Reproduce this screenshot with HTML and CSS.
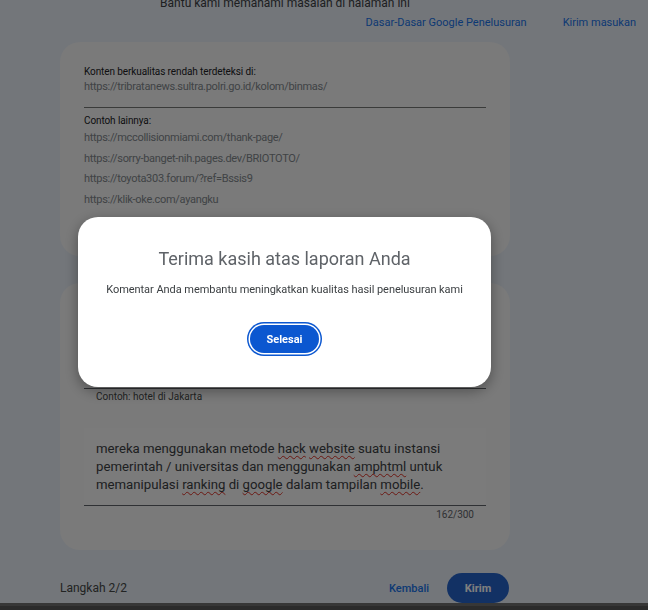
FILE: index.html
```html
<!DOCTYPE html>
<html lang="id">
<head>
    <meta charset="UTF-8">
    <meta name="viewport" content="width=device-width, initial-scale=1.0">
    <title>Laporkan konten berkualitas rendah</title>
    <link rel="stylesheet" href="styles.css">
</head>
<body>
    <div class="intro">Bantu kami memahami masalah di halaman ini</div>
    <div class="top-links">
        <a href="#">Dasar-Dasar Google Penelusuran</a>
        <a href="#">Kirim masukan</a>
    </div>

    <div class="main">
        <div class="card">
            <div class="label">Konten berkualitas rendah terdeteksi di:</div>
            <div class="url">https://tribratanews.sultra.polri.go.id/kolom/binmas/</div>
            <div class="divider"></div>
            <div class="label label-more">Contoh lainnya:</div>
            <div class="more">
                <div class="url">https://mccollisionmiami.com/thank-page/</div>
                <div class="url">https://sorry-banget-nih.pages.dev/BRIOTOTO/</div>
                <div class="url">https://toyota303.forum/?ref=Bssis9</div>
                <div class="url">https://klik-oke.com/ayangku</div>
            </div>
        </div>

        <div class="card card-form">
            <div class="form-title">Kueri penelusuran</div>
            <div class="field"></div>
            <div class="hint">Contoh: hotel di Jakarta</div>
            <div class="textarea">mereka menggunakan metode <span class="typo">hack</span> <span class="typo">website</span> suatu instansi pemerintah / universitas dan menggunakan <span class="typo">amphtml</span> untuk memanipulasi <span class="typo">ranking</span> di <span class="typo">google</span> dalam tampilan <span class="typo">mobile</span>.</div>
            <div class="counter">162/300</div>
        </div>

        <div class="steps">
            <span class="step">Langkah 2/2</span>
            <div class="actions">
                <a href="#" class="back">Kembali</a>
                <button class="send">Kirim</button>
            </div>
        </div>
    </div>
    <div class="taskbar"></div>

    <div class="overlay">
        <div class="dialog">
            <div class="dialog-title">Terima kasih atas laporan Anda</div>
            <div class="dialog-text">Komentar Anda membantu meningkatkan kualitas hasil penelusuran kami</div>
            <button class="done">Selesai</button>
        </div>
    </div>
</body>
</html>
```

FILE: styles.css
```css
body {
    font-family: Roboto, "Liberation Sans", sans-serif;
    background-color: #e6ecf4;
    color: #202124;
    margin: 0;
    padding: 0;
    overflow: hidden;
}

.intro {
    margin-top: -7px;
    width: 450px;
    margin-left: 60px;
    text-align: center;
    font-size: 12px;
    line-height: 20px;
    color: #3c4043;
}

.top-links {
    display: flex;
    justify-content: flex-end;
    gap: 36px;
    padding-right: 12px;
    margin-top: 2px;
    font-size: 11px;
    line-height: 16px;
}

.top-links a {
    color: #1a73e8;
    text-decoration: none;
}

.main {
    width: 450px;
    margin-left: 60px;
    margin-top: 11px;
}

.card {
    background-color: #f4f4f4;
    border-radius: 20px;
    padding: 22px 24px 46px;
}

.label {
    font-size: 10px;
    letter-spacing: -0.1px;
    line-height: 15px;
    color: #202124;
}

.label-more {
    margin-top: 6px;
    line-height: 14px;
}

.url {
    font-size: 11px;
    letter-spacing: -0.3px;
    line-height: 16px;
    color: #80868b;
}

.more .url {
    line-height: 20.6px;
}

.divider {
    height: 1px;
    background-color: #747775;
    margin-top: 12px;
}

.card-form {
    margin-top: 27px;
    padding: 22px 24px 27px;
}

.form-title {
    font-size: 13px;
    line-height: 20px;
}

.field {
    height: 53px;
    margin-top: 10px;
    border-bottom: 1px solid #5f6368;
}

.hint {
    font-size: 10px;
    line-height: 14px;
    color: #444746;
    padding-left: 12px;
    margin-top: 1px;
}

.textarea {
    margin-top: 24px;
    background-color: #f6f6f6;
    padding: 12px 12px 11px;
    font-size: 13.2px;
    line-height: 18px;
    color: #3c4043;
    border-bottom: 1px solid #5f6368;
    height: 54px;
}

.typo {
    text-decoration: underline wavy #d93025;
    text-decoration-thickness: 1px;
    text-underline-offset: 2px;
}

.counter {
    text-align: right;
    padding-right: 12px;
    margin-top: 1px;
    font-size: 10px;
    line-height: 16px;
    color: #5f6368;
}

.steps {
    display: flex;
    justify-content: space-between;
    align-items: center;
    margin-top: 23px;
    height: 30px;
}

.step {
    font-size: 12px;
    color: #444746;
}

.actions {
    display: flex;
    align-items: center;
    gap: 18px;
}

.back {
    font-size: 11px;
    font-weight: 500;
    color: #1a73e8;
    text-decoration: none;
}

.send {
    width: 62px;
    height: 30px;
    margin-right: 1px;
    border: none;
    border-radius: 15px;
    background-color: #2563c9;
    color: white;
    font-family: inherit;
    font-size: 11px;
    font-weight: 700;
}

.taskbar {
    height: 20px;
    background-color: #575757;
    border-top: 3px solid #6e6e6e;
}

.overlay {
    position: fixed;
    inset: 0;
    background-color: rgba(0, 0, 0, 0.5);
}

.dialog {
    position: absolute;
    top: 217px;
    left: 78px;
    width: 413px;
    box-sizing: border-box;
    padding: 30px 16px 34px;
    background-color: white;
    border-radius: 20px;
    box-shadow: 0 4px 14px rgba(0, 0, 0, 0.35);
    text-align: center;
}

.dialog-title {
    font-size: 18px;
    line-height: 24px;
    color: #5f6368;
}

.dialog-text {
    margin-top: 11px;
    font-size: 11px;
    letter-spacing: -0.05px;
    line-height: 16px;
    color: #3c4043;
}

.done {
    margin-top: 27px;
    width: 69px;
    height: 28px;
    border: none;
    border-radius: 14px;
    background-color: #0b57d0;
    box-shadow: 0 0 0 1.5px white, 0 0 0 3px #0b57d0;
    color: white;
    font-family: inherit;
    font-size: 11px;
    font-weight: 700;
}
```
